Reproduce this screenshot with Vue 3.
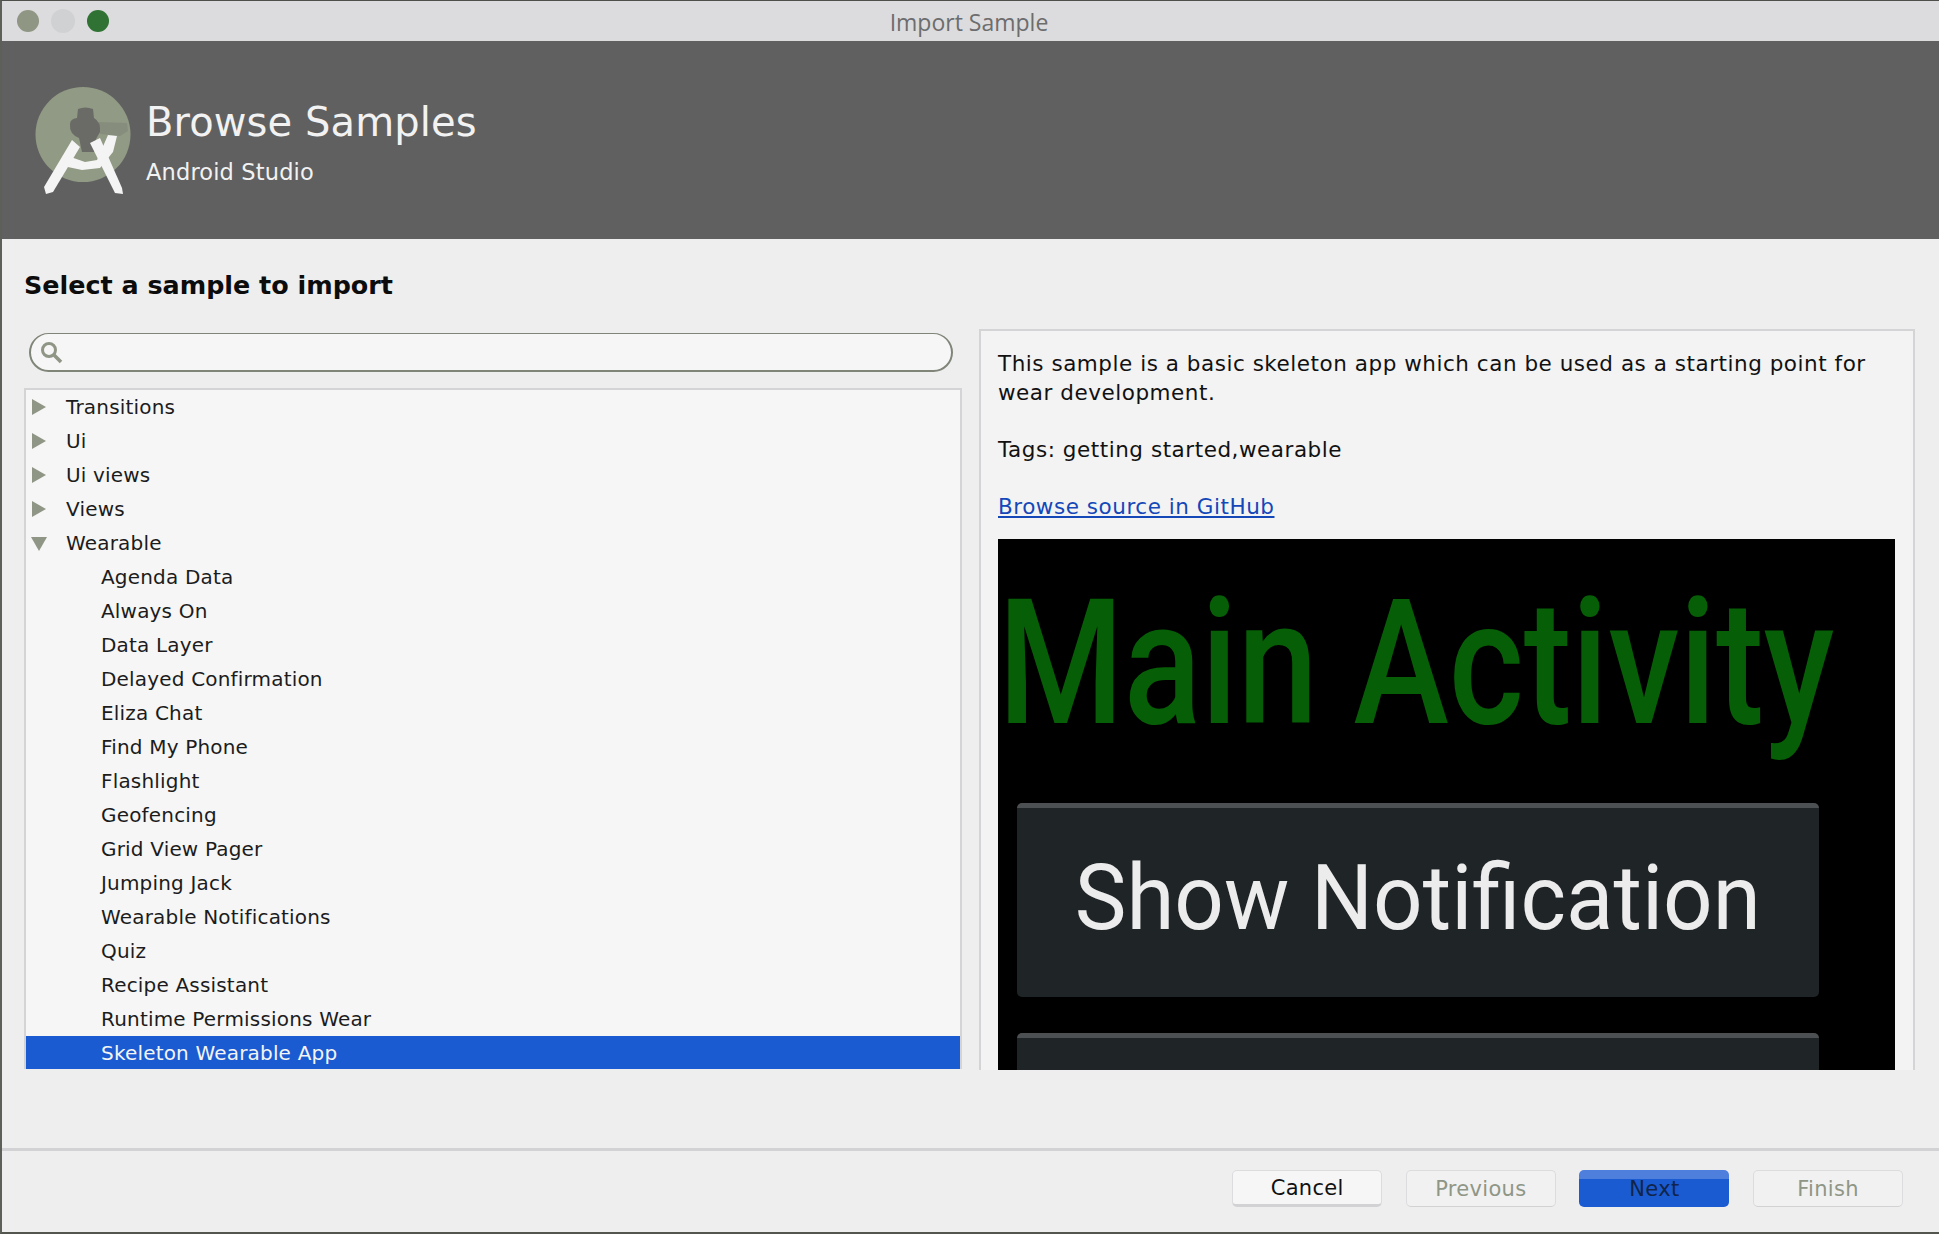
<script setup>
import { ref } from 'vue'

const groups = ref(['Transitions', 'Ui', 'Ui views', 'Views'])
const samples = ref([
  'Agenda Data', 'Always On', 'Data Layer', 'Delayed Confirmation', 'Eliza Chat',
  'Find My Phone', 'Flashlight', 'Geofencing', 'Grid View Pager', 'Jumping Jack',
  'Wearable Notifications', 'Quiz', 'Recipe Assistant', 'Runtime Permissions Wear',
  'Skeleton Wearable App'
])
</script>

<template>
  <div class="window">
    <div class="titlebar">
      <div class="lights">
        <span class="light close"></span>
        <span class="light min"></span>
        <span class="light max"></span>
      </div>
      <div class="title">Import Sample</div>
    </div>

    <div class="banner">
      <svg class="logo" width="104" height="112" viewBox="0 0 104 112">
        <circle cx="51" cy="48.5" r="47.5" fill="#919a84" />
        <path d="M66 36 L95 37 L96 45 L88 50 L68 48 Z" fill="#878d7c" />
        <path d="M46 23 Q53 20 61 23 L62 32 Q69 36 68 46 L64 53 L62 66 L50 66 L47 52 Q37 48 38 38 Q38 33 45 32 Z" fill="#6a6b66" />
        <path d="M12 101 L40 54 L48 61 L21 106 L14 108 Z" fill="#f4f4f4" />
        <path d="M58 57 L68 52 L90 102 L91 108 L83 107 Z" fill="#f4f4f4" />
        <path d="M33 69 L53 76 L65 74 L76 49 L85 50 L81 66 L68 82 L50 84 L31 80 Z" fill="#f4f4f4" />
      </svg>
      <div class="banner-text">
        <div class="banner-title">Browse Samples</div>
        <div class="banner-sub">Android Studio</div>
      </div>
    </div>

    <div class="content">
      <h1 class="heading">Select a sample to import</h1>
      <div class="columns">
        <div class="left">
          <div class="search">
            <svg width="24" height="24" viewBox="0 0 24 24" fill="none" stroke="#8f9685">
              <circle cx="10" cy="10" r="6.5" stroke-width="3" />
              <path d="M15 15l7 7" stroke-width="3.5" />
            </svg>
          </div>
          <div class="tree">
            <div v-for="g in groups" :key="g" class="row">
              <span class="arrow right"></span>{{ g }}
            </div>
            <div class="row">
              <span class="arrow down"></span>Wearable
            </div>
            <div
              v-for="s in samples"
              :key="s"
              class="row child"
              :class="{ selected: s === 'Skeleton Wearable App' }"
            >{{ s }}</div>
          </div>
        </div>

        <div class="detail">
          <p class="desc">This sample is a basic skeleton app which can be used as a starting point for wear development.</p>
          <p class="desc">Tags: getting started,wearable</p>
          <p class="desc"><a class="link">Browse source in GitHub</a></p>
          <div class="preview">
            <div class="main-activity">Main Activity</div>
            <div class="watch-btn"><span>Show Notification</span></div>
            <div class="watch-btn"></div>
          </div>
        </div>
      </div>
    </div>

    <div class="footer">
      <button class="btn">Cancel</button>
      <button class="btn off">Previous</button>
      <button class="btn primary">Next</button>
      <button class="btn off">Finish</button>
    </div>
  </div>
</template>

<style>
html, body {
  margin: 0;
  background: #eeeeef;
}
</style>

<style scoped>
.window {
  width: 1939px;
  height: 1234px;
  box-sizing: border-box;
  display: flex;
  flex-direction: column;
  overflow: hidden;
  background: #eeeeef;
  border-left: 2px solid #5c6058;
  border-bottom: 2px solid #53564f;
  border-top: 1px solid #4c4f4a;
  font-family: "DejaVu Sans", sans-serif;
  color: #111;
}

.titlebar {
  height: 40px;
  flex: none;
  display: flex;
  align-items: center;
  position: relative;
  background: #dcdcde;
}

.lights {
  display: flex;
  align-items: center;
  gap: 12px;
  padding-left: 15px;
}

.light {
  width: 22px;
  height: 22px;
  border-radius: 50%;
}

.close { background: #8f9683; }
.min { background: #d0d1d3; width: 24px; height: 24px; }
.max { background: #2f7233; }

.title {
  position: absolute;
  left: -3px;
  right: 0;
  top: 5px;
  text-align: center;
  font-family: "Open Sans", sans-serif;
  font-size: 23px;
  color: #6d6d6d;
}

.banner {
  height: 198px;
  flex: none;
  background: #606060;
  display: flex;
  align-items: flex-start;
  color: #f2f2f2;
}

.logo {
  margin: 45px 0 0 30px;
}

.banner-text {
  margin: 56px 0 0 10px;
}

.banner-title {
  font-size: 40px;
  line-height: 50px;
  letter-spacing: 0.1px;
}

.banner-sub {
  font-size: 22.5px;
  line-height: 30px;
  margin-top: 10px;
  letter-spacing: 0.15px;
}

.content {
  flex: 1;
  display: flex;
  flex-direction: column;
  padding: 28px 21px 0 22px;
  min-height: 0;
}

.heading {
  margin: 0 0 26px;
  font-size: 25.4px;
  line-height: 36px;
  font-weight: 700;
  color: #0c0c0c;
}

.columns {
  display: grid;
  grid-template-columns: 938px 936px;
  column-gap: 17px;
  align-items: start;
}

.left {
  padding-top: 4px;
}

.search {
  width: 924px;
  margin-left: 5px;
  height: 39px;
  box-sizing: border-box;
  border: 2px solid #7f8578;
  border-top-width: 1px;
  border-radius: 20px;
  background: #f6f6f6;
  display: flex;
  align-items: center;
  padding-left: 8px;
}

.tree {
  margin-top: 16px;
  height: 681px;
  box-sizing: border-box;
  border: 2px solid #d4d4d6;
  border-bottom: 0;
  background: #f6f6f6;
  font-size: 20px;
  overflow: hidden;
}

.row {
  height: 34px;
  display: flex;
  align-items: center;
  padding-left: 40px;
  position: relative;
  color: #1c1c1c;
  letter-spacing: 0.18px;
}

.row.child {
  padding-left: 75px;
}

.row.selected {
  background: #1b5bd1;
  color: #f4f4f4;
}

.arrow {
  position: absolute;
  width: 0;
  height: 0;
}

.arrow.right {
  left: 6px;
  top: 9px;
  border-left: 14px solid #8f9685;
  border-top: 8px solid transparent;
  border-bottom: 8px solid transparent;
}

.arrow.down {
  left: 5px;
  top: 11px;
  border-top: 14px solid #8f9685;
  border-left: 8px solid transparent;
  border-right: 8px solid transparent;
}

.detail {
  height: 741px;
  box-sizing: border-box;
  border: 2px solid #d4d4d6;
  border-bottom: 0;
  padding: 19px 18px 0 17px;
  display: flex;
  flex-direction: column;
  overflow: hidden;
  background: #f3f3f3;
  font-size: 21.5px;
  line-height: 28.5px;
}

.desc {
  margin: 0 0 28.5px;
  letter-spacing: 0.53px;
}

.link {
  color: #1447b8;
  text-decoration: underline;
}

.preview {
  flex: 1;
  min-height: 0;
  margin-top: -11px;
  background: #000;
  overflow: hidden;
  display: flex;
  flex-direction: column;
  font-family: Roboto, sans-serif;
}

.main-activity {
  height: 264px;
  flex: none;
  font-size: 175px;
  font-weight: 500;
  line-height: 250px;
  color: #065f06;
  white-space: nowrap;
  transform: scaleX(0.821);
  transform-origin: left top;
}

.watch-btn {
  flex: none;
  width: 802px;
  height: 194px;
  margin: 0 0 36px 19px;
  box-sizing: border-box;
  background: #1f2427;
  border-top: 5px solid #4c5052;
  border-radius: 5px;
  display: flex;
  align-items: center;
  justify-content: center;
  color: #ececec;
  font-size: 90px;
  white-space: nowrap;
}

.watch-btn span {
  transform: scaleX(0.967);
  margin-top: -5px;
}

.footer {
  height: 84px;
  box-sizing: border-box;
  flex: none;
  margin-top: auto;
  border-top: 3px solid #d2d2d4;
  display: flex;
  justify-content: flex-end;
  align-items: flex-start;
  gap: 23.6px;
  padding: 19px 36px 0 0;
}

.btn {
  width: 150px;
  height: 37px;
  padding: 0;
  border: 1px solid #dcdcde;
  border-bottom: 3px solid #d2d2d4;
  border-radius: 5px;
  background: #f6f6f6;
  font-family: "DejaVu Sans", sans-serif;
  font-size: 21px;
  color: #111;
  letter-spacing: 0.3px;
}

.btn.off {
  color: #8f9685;
  border-bottom-width: 1px;
  background: #f1f1f2;
}

.btn.primary {
  background: linear-gradient(#4f7fdc 0 9px, #1b5bd1 9px);
  border: 0;
  color: #11244a;
}
</style>
